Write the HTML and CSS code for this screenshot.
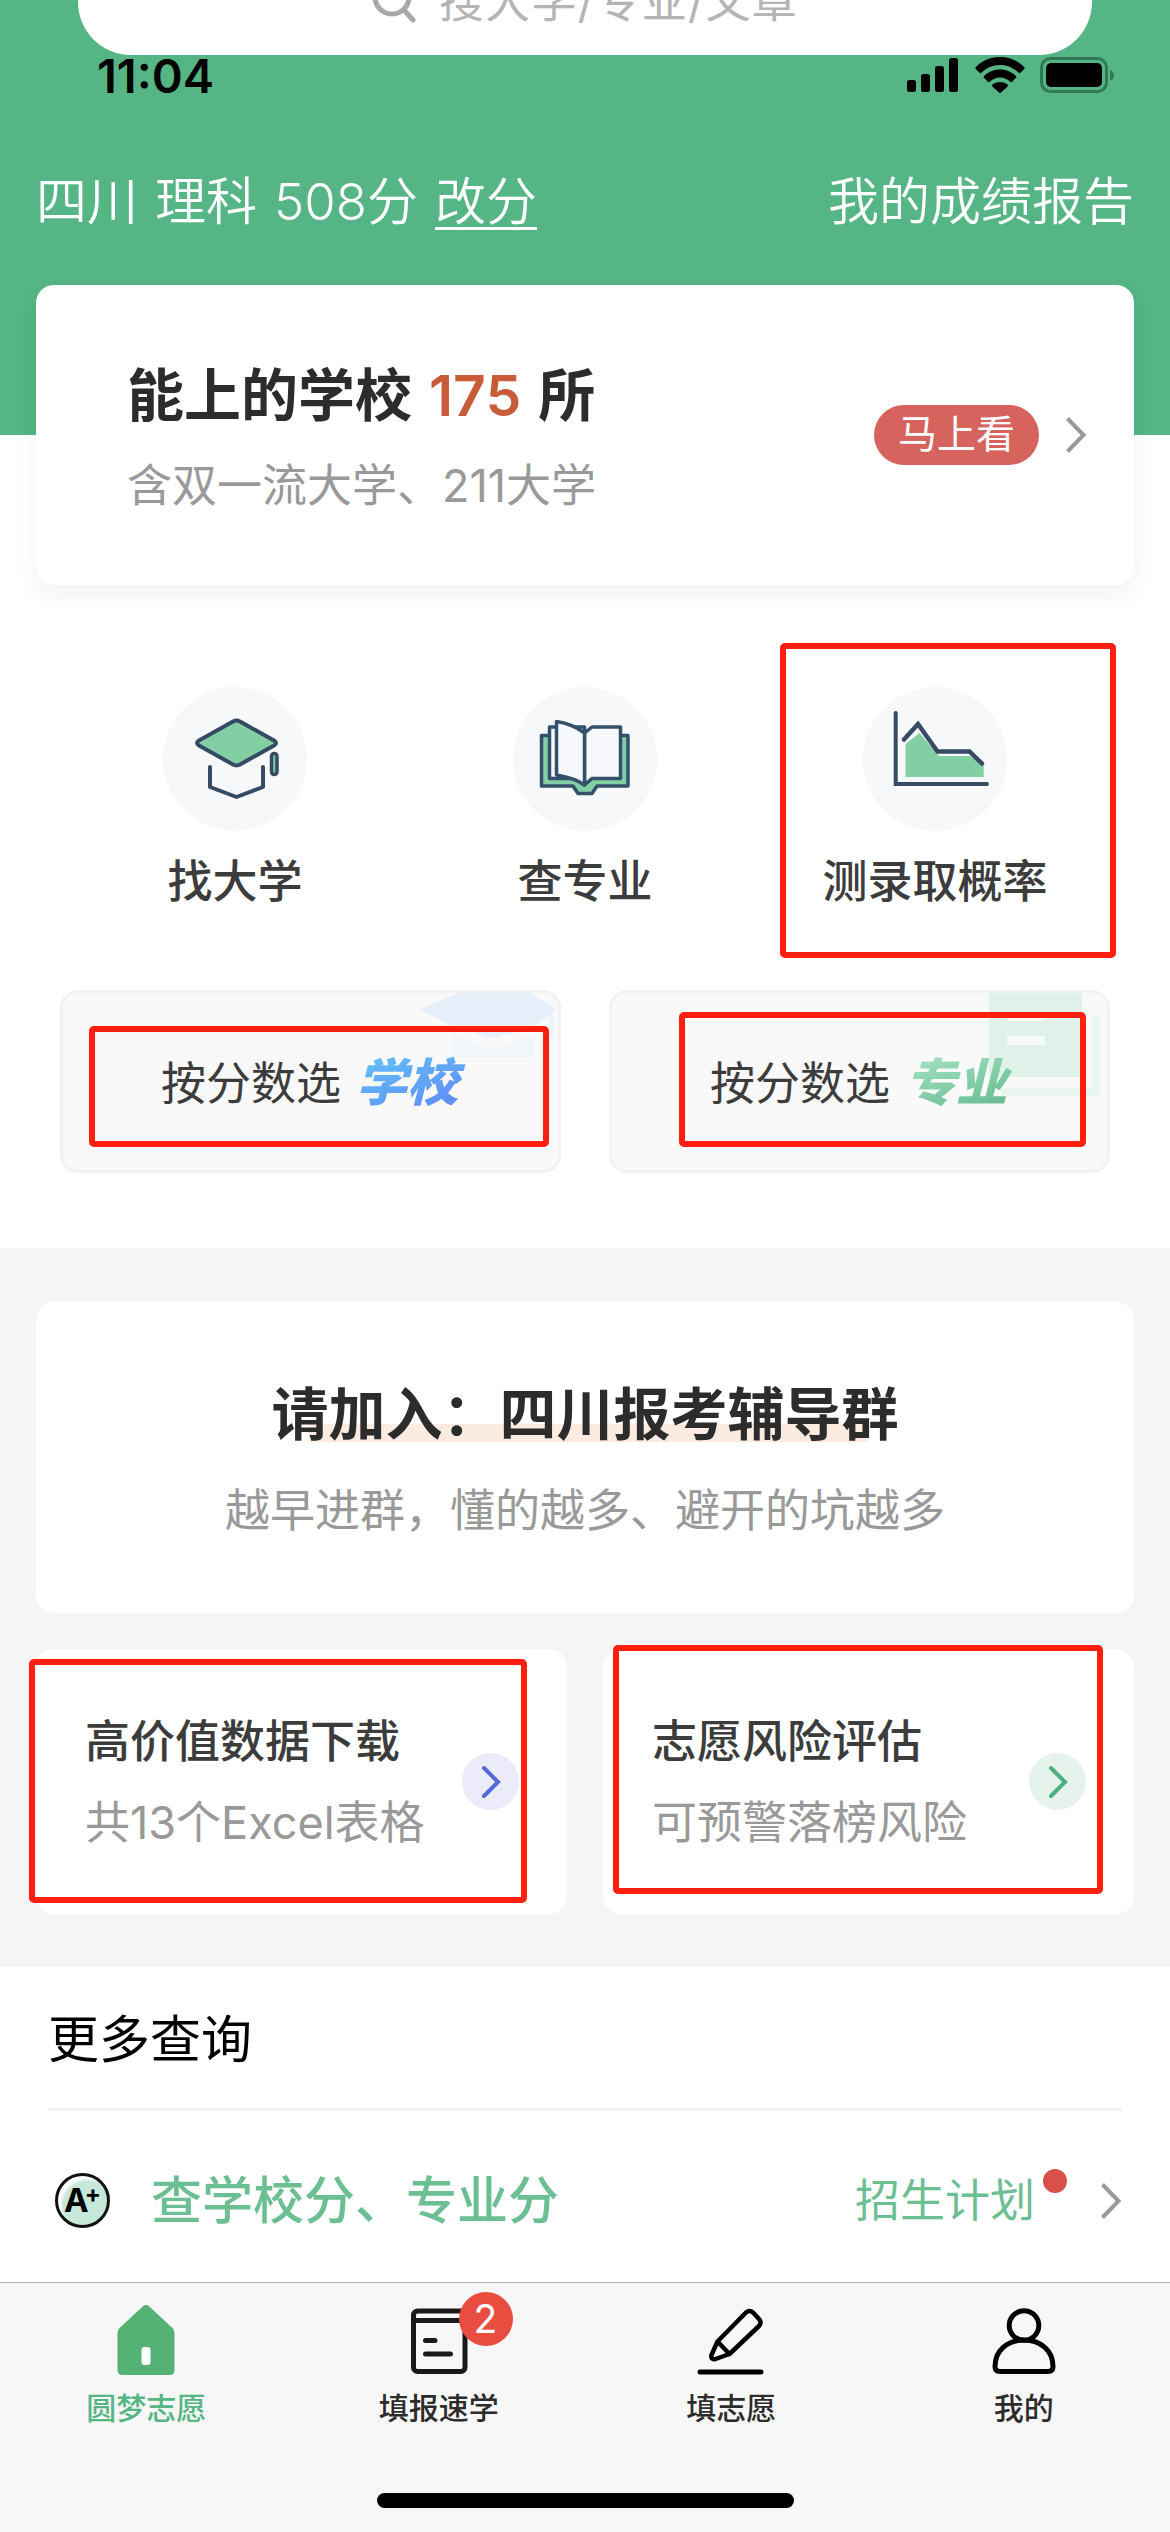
FILE: index.html
```html
<!DOCTYPE html>
<html lang="zh-CN">
<head>
<meta charset="utf-8">
<title>圆梦志愿</title>
<link rel="stylesheet" href="styles.css">
</head>
<body>
<div class="app">
  <header class="header">
    <div class="search">
      <svg class="search-icon" width="44" height="46" viewBox="0 0 44 46" fill="none" stroke="#a8a8a8" stroke-width="5" stroke-linecap="round"><circle cx="20" cy="20" r="17"/><path d="M32 33l9 10"/></svg>
      <span>搜大学/专业/文章</span>
    </div>
    <div class="status">
      <span class="clock">11:04</span>
      <div class="status-icons">
        <svg width="53" height="36" viewBox="0 0 53 36"><rect x="0" y="23" width="9" height="12" rx="2.5"/><rect x="14" y="17" width="9" height="18" rx="2.5"/><rect x="28" y="9" width="9" height="26" rx="2.5"/><rect x="42" y="1" width="9" height="34" rx="2.5"/></svg>
        <svg width="50" height="36" viewBox="0 0 50 36"><path d="M25 0C15 0 6.500 4 .8 10.200q-.8 1 0 1.800l3.800 3.800q.9.900 1.800 0C11.300 10.800 17.800 8 25 8s13.700 2.800 18.600 7.800q.9.900 1.800 0l3.800-3.800q.8-.8 0-1.800C43.500 4 35 0 25 0z"/><path d="M25 12.500c-6.300 0-12 2.500-16 6.500q-.8.900 0 1.800l4 4q.9.800 1.800 0c2.600-2.600 6.200-4.200 10.200-4.200s7.600 1.600 10.200 4.200q.9.800 1.800 0l4-4q.8-.9 0-1.800c-4-4-9.700-6.500-16-6.500z"/><path d="M25 25c-3 0-5.600 1-7.600 2.800q-.9.900 0 1.800l6.600 6q1 .8 2 0l6.600-6q.9-.9 0-1.800C30.600 26 28 25 25 25z"/></svg>
        <svg width="76" height="37" viewBox="0 0 76 37"><rect x="1.500" y="1.500" width="65" height="33" rx="9" fill="none" stroke="#2f7a54" stroke-width="3"/><rect x="6" y="6" width="56" height="24" rx="5"/><path d="M70 13q4 1.500 4 5.500t-4 5.500z" fill="#2f7a54"/></svg>
      </div>
    </div>
    <div class="profile">
      <div class="score"><span>四川</span><span>理科</span><span>508分</span><a class="edit">改分</a></div>
      <a>我的成绩报告</a>
    </div>
  </header>

  <section class="school-card">
    <div>
      <h1 class="school-title">能上的学校<b class="count">175</b>所</h1>
      <p class="sub">含双一流大学、211大学</p>
    </div>
    <div class="school-action">
      <span class="pill">马上看</span>
      <svg width="22" height="38" viewBox="0 0 22 38" fill="none" stroke="#999" stroke-width="4"><path d="M2.500 2.500L18.500 19 2.500 35.500"/></svg>
    </div>
  </section>

  <nav class="shortcuts">
    <a class="shortcut">
      <svg class="disc" viewBox="0 0 144 144"><g stroke="#364a63" stroke-width="4" stroke-linecap="round" stroke-linejoin="round"><path d="M36 53.500q-4 2.500 0 5L70 77.500q3.500 1.800 7 0l34-19q4-2.500 0-5L77 34.500q-3.500-1.800-7 0z" fill="#81cfa3"/><path d="M47 80v20l26.500 10L100 100V80" fill="none"/><rect x="108.500" y="66.500" width="5.500" height="21" rx="2.700" fill="#81cfa3" stroke-width="3.500"/></g></svg>
      <span>找大学</span>
    </a>
    <a class="shortcut">
      <svg class="disc" viewBox="0 0 144 144"><g stroke="#33516a" stroke-width="3.500" stroke-linejoin="round"><path d="M28.500 48.500V99H60l5 7.500h14l5-7.500h31V48.500z" fill="#81cfa3"/><path d="M71.500 98q-3-6.500-11-6.500H36.500v-51.500H71.500zM71.500 46l7.500-6h28.500v51.500H79L71.500 98z" fill="#f6f8fb"/><path d="M43.500 34.500Q60 37 71.500 46v52Q63 91.500 43.500 88z" fill="#f6f8fb"/></g></svg>
      <span>查专业</span>
    </a>
    <a class="shortcut">
      <svg class="disc" viewBox="0 0 144 144"><path d="M42.500 57l14-11L76 69h31l13.700 9v12H42.500z" fill="#81cfa3"/><g fill="none" stroke="#364a63" stroke-width="4" stroke-linecap="round"><path d="M32.700 26v71H124"/><path d="M41 52.500L55 37l19.500 27.500h32l12.500 12" stroke-width="4.500"/></g></svg>
      <span>测录取概率</span>
      <i class="mark mark-rate"></i>
    </a>
  </nav>

  <section class="options">
    <a class="option">
      <svg class="deco" width="150" height="100" viewBox="0 0 150 100"><path d="M44 41v24h82V41L85 57z" fill="#f1f6fb"/><path d="M49 0L12 16.500 44 33l41 12 41-12 23-16.500L122 0z" fill="#e6effa"/><path d="M143 22v22" stroke="#edf3fa" stroke-width="5"/></svg>
      <span>按分数选</span><em class="fancy blue">学校</em>
      <i class="mark mark-school"></i>
    </a>
    <a class="option">
      <svg class="deco" width="150" height="110" viewBox="0 0 150 110"><path d="M32 0h93v84H32z" fill="#dff1e8"/><path d="M50 19h38v9H50zM50 43h38v9H50z" fill="#f6fbf8"/><path d="M138.500 23v76H44" fill="none" stroke="#e9f5ef" stroke-width="8"/></svg>
      <span>按分数选</span><em class="fancy green">专业</em>
      <i class="mark mark-major"></i>
    </a>
  </section>

  <section class="services">
    <div class="group-card">
      <h2 class="group-title">请加入：四川报考辅导群</h2>
      <p class="sub">越早进群，懂的越多、避开的坑越多</p>
    </div>
    <div class="tools">
      <a class="tool">
        <div><h3>高价值数据下载</h3><p class="sub">共13个Excel表格</p></div>
        <span class="go go-blue"><svg width="21" height="34" viewBox="0 0 21 34" fill="none" stroke="currentColor" stroke-width="4" stroke-linecap="round"><path d="M4 3l14 14L4 31"/></svg></span>
        <i class="mark mark-data"></i>
      </a>
      <a class="tool">
        <div><h3>志愿风险评估</h3><p class="sub">可预警落榜风险</p></div>
        <span class="go go-green"><svg width="21" height="34" viewBox="0 0 21 34" fill="none" stroke="currentColor" stroke-width="4" stroke-linecap="round"><path d="M4 3l14 14L4 31"/></svg></span>
        <i class="mark mark-risk"></i>
      </a>
    </div>
  </section>

  <section class="more">
    <h2 class="more-title">更多查询</h2>
    <a class="query">
      <span class="grade">A<sup>+</sup></span>
      <span class="query-name">查学校分、专业分</span>
      <span class="plan">招生计划<i class="dot"></i></span>
      <svg width="22" height="38" viewBox="0 0 22 38" fill="none" stroke="#999" stroke-width="4"><path d="M2.500 2.500L18.500 19 2.500 35.500"/></svg>
    </a>
  </section>

  <footer class="tabbar">
    <nav class="tabs">
      <a class="tab active">
        <svg width="70" height="70" viewBox="0 0 70 70"><path d="M32 1.200q3-2.400 6 0L61.500 23Q63.500 25 63.500 28v37q0 5-5 5h-47q-5 0-5-5V28q0-3 2-5z" fill="#53b274"/><rect x="30.500" y="42" width="9" height="18" rx="3" fill="#fff"/></svg>
        <span>圆梦志愿</span>
      </a>
      <a class="tab">
        <svg width="70" height="70" viewBox="0 0 70 70" fill="none" stroke="#1a1a1a" stroke-width="5" stroke-linecap="round"><rect x="9.500" y="6" width="51.500" height="60.500" rx="4"/><path d="M9.500 15.500H61M21.500 35.500h9.500M21.500 49h25"/></svg>
        <span>填报速学</span>
        <b class="badge">2</b>
      </a>
      <a class="tab">
        <svg width="70" height="70" viewBox="0 0 70 70" fill="none" stroke="#000" stroke-width="4.500" stroke-linecap="round" stroke-linejoin="round"><path d="M21.500 36.500L50 7.500q3.500-3 7 0l6 6.500q3 3.500 0 7L33.500 49l-14 5q-5 1-4-4zL33.500 49"/><path d="M4 67h61" stroke-width="5"/></svg>
        <span>填志愿</span>
      </a>
      <a class="tab">
        <svg width="70" height="70" viewBox="0 0 70 70" fill="none" stroke="#000" stroke-width="5"><circle cx="35" cy="20.500" r="14.800"/><path d="M35 35C18 35 6 46 6 61.500q0 5 5 5h48q5 0 5-5C64 46 52 35 35 35z"/></svg>
        <span>我的</span>
      </a>
    </nav>
    <div class="home-indicator"></div>
  </footer>
</div>
</body>
</html>
```
FILE: styles.css
```css
* {
  box-sizing: border-box;
  margin: 0;
  padding: 0;
}

body {
  font-family: Inter, "Noto Sans CJK SC", sans-serif;
  font-size: 45px;
  line-height: 1;
  color: #3c3c3c;
  background: #fff;
}

h1, h2, h3 { font-weight: 500; font-size: inherit; }
i { font-style: normal; }
svg { display: block; flex: none; }

.app {
  width: 1170px;
  height: 2532px;
  overflow: hidden;
  display: flex;
  flex-direction: column;
}

/* Header */
.header {
  height: 435px;
  flex: none;
  background: #55b584;
}

.search {
  width: 1014px;
  height: 107px;
  margin: -52px auto 0;
  border-radius: 53px;
  background: #fff;
  color: #b4b4b4;
  letter-spacing: 1.3px;
  display: flex;
  align-items: center;
  justify-content: center;
  gap: 23px;
}

.search-icon { margin-top: -4px; }

.status {
  height: 40px;
  padding: 0 54px 0 97px;
  display: flex;
  align-items: center;
  justify-content: space-between;
  color: #000;
}

.clock { font-size: 47px; font-weight: 600; }
.status-icons { display: flex; gap: 15px; align-items: center; }

.profile {
  margin-top: 74px;
  height: 64px;
  padding: 0 36px;
  display: flex;
  align-items: center;
  justify-content: space-between;
  font-size: 51px;
  color: #fff;
  font-weight: 350;
}

.score { display: flex; gap: 17px; }
.edit { box-shadow: 0 3px 0 #fff; }

/* School card */
.school-card {
  position: relative;
  height: 300px;
  flex: none;
  margin: -150px 36px 0;
  padding: 0 47px 0 91px;
  border-radius: 18px;
  background: #fff;
  box-shadow: 0 9px 24px rgba(0, 0, 0, .06);
  display: flex;
  align-items: center;
  justify-content: space-between;
}

.school-title { font-size: 57px; color: #2c2c2c; font-weight: 600; margin-bottom: 39px; margin-top: 4px; }
.count { color: #c95c38; margin: 0 17px; font-weight: 600; }
.sub { color: #999; font-weight: 400; }
.school-action { display: flex; align-items: center; gap: 26px; }

.pill {
  width: 165px;
  height: 60px;
  border-radius: 30px;
  background: #d6635d;
  color: #fff;
  font-size: 39px;
  line-height: 58px;
  text-align: center;
}

/* Shortcuts */
.shortcuts {
  display: grid;
  grid-template-columns: repeat(3, 350px);
  justify-content: center;
  padding-top: 102px;
}

.shortcut {
  position: relative;
  display: flex;
  flex-direction: column;
  align-items: center;
  gap: 28px;
  font-weight: 500;
}

.disc { width: 144px; height: 144px; border-radius: 50%; background: #f6f8fa; }

/* Highlight frames over featured entries */
.mark {
  position: absolute;
  border: 6px solid #ff1f10;
  border-radius: 5px;
}

.mark-rate { left: 20px; top: -44px; width: 336px; height: 315px; }
.mark-school { left: 26px; top: 33px; width: 460px; height: 121px; }
.mark-major { left: 67px; top: 19px; width: 407px; height: 135px; }
.mark-data { left: -7px; top: 10px; width: 498px; height: 244px; }
.mark-risk { left: 10px; top: -4px; width: 490px; height: 249px; }

/* Options */
.options {
  display: grid;
  grid-template-columns: 501px 501px;
  gap: 48px;
  justify-content: center;
  padding-top: 86px;
}

.option {
  position: relative;
  height: 183px;
  border: 3px solid #f2f2f2;
  border-radius: 18px;
  background: #f9f9f9;
  display: flex;
  align-items: center;
  padding: 3px 0 0 98px;
  gap: 15px;
}

.option span { position: relative; }
.deco { position: absolute; right: 0; top: 0; }

.fancy {
  position: relative;
  font-size: 51px;
  font-weight: 900;
  line-height: 64px;
  padding-right: 8px;
  font-style: italic;
  background-clip: text;
  -webkit-background-clip: text;
  color: transparent;
}

.blue { background-image: linear-gradient(160deg, #61bdf8 15%, #6090f8 80%); }
.green { background-image: linear-gradient(160deg, #9edfbf 15%, #6dbf95 80%); }

/* Services */
.services {
  margin-top: 75px;
  height: 719px;
  flex: none;
  padding: 54px 36px 0;
  background: #f5f5f5;
}

.group-card {
  height: 311px;
  border-radius: 18px;
  background: #fff;
  display: flex;
  flex-direction: column;
  align-items: center;
  padding-top: 84px;
  gap: 45px;
}

.group-title {
  font-size: 57px;
  font-weight: 600;
  color: #2c2c2c;
  background: linear-gradient(#fcebe1, #fcebe1) 36px 38px / 560px 18px no-repeat;
}

.tools {
  display: grid;
  grid-template-columns: 1fr 1fr;
  gap: 36px;
  margin-top: 36px;
}

.tool {
  position: relative;
  height: 265px;
  border-radius: 18px;
  background: #fff;
  display: flex;
  align-items: center;
  justify-content: space-between;
  padding: 0 48px 0 49px;
}

.tool h3 { margin-bottom: 36px; margin-top: 1px; }

.go {
  width: 57px;
  height: 57px;
  border-radius: 50%;
  display: flex;
  align-items: center;
  justify-content: center;
}

.go-blue { color: #5468d8; background: #ebebfa; }
.go-green { color: #4caf7d; background: #e6f3ec; }

/* More queries */
.more { padding: 0 48px; flex: 1; }

.more-title {
  height: 144px;
  padding-top: 47px;
  font-size: 51px;
  font-weight: 400;
  color: #000;
  border-bottom: 3px solid #f2f2f2;
}

.query {
  height: 171px;
  padding-top: 8px;
  display: flex;
  align-items: center;
  color: #6cbe93;
}

.grade {
  width: 55px;
  height: 55px;
  margin-left: 7px;
  border: 3px solid #111;
  border-radius: 50%;
  background: radial-gradient(circle at 60% 60%, #c5e8d8 58%, #fff 66%);
  color: #000;
  font-size: 33px;
  font-weight: 700;
  line-height: 49px;
  display: flex;
  justify-content: center;
}

.grade sup { font-size: 24px; line-height: 35px; margin-left: -4px; }
.query-name { font-size: 51px; font-weight: 500; margin-left: 41px; }
.plan { position: relative; margin-left: auto; margin-right: 65px; }

.dot {
  position: absolute;
  right: -32px;
  top: -9px;
  width: 24px;
  height: 24px;
  border-radius: 50%;
  background: #d94f4a;
}

/* Tab bar */
.tabbar {
  height: 250px;
  flex: none;
  background: #f7f7f7;
  border-top: 1px solid #b2b2b2;
}

.tabs {
  display: grid;
  grid-template-columns: repeat(4, 1fr);
  padding-top: 22px;
  height: 210px;
}

.tab {
  position: relative;
  display: flex;
  flex-direction: column;
  align-items: center;
  gap: 18px;
  font-size: 30px;
  font-weight: 500;
  color: #2c2c2c;
}

.active { color: #55b584; }

.badge {
  position: absolute;
  left: 166px;
  top: -13px;
  width: 54px;
  height: 54px;
  border-radius: 50%;
  background: #e94d3f;
  color: #fff;
  font-size: 39px;
  font-weight: 400;
  line-height: 54px;
  text-align: center;
}

.home-indicator {
  width: 417px;
  height: 15px;
  margin: 0 auto;
  border-radius: 8px;
  background: #000;
}
```
